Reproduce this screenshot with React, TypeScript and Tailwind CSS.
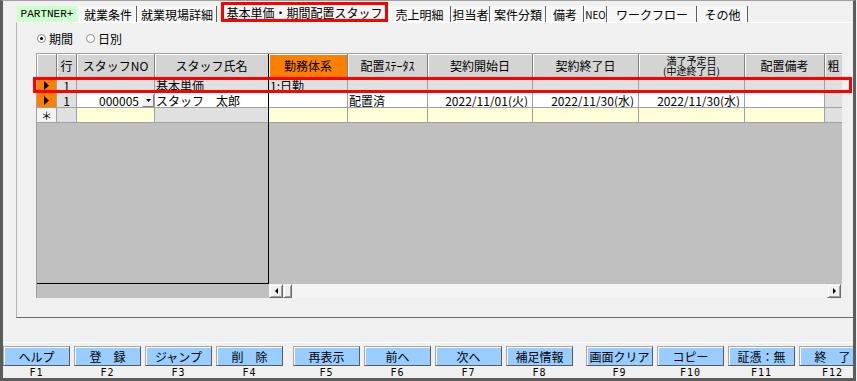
import clsx from "clsx";
import type { ReactNode } from "react";

const TABS = [
  { label: "就業条件", w: "w-[58px]" },
  { label: "就業現場詳細", w: "w-[80px]" },
  { label: "基本単価・期間配置スタッフ", w: "w-[167px]", active: true },
  { label: "売上明細", w: "w-[63px]" },
  { label: "担当者", w: "w-[39px]" },
  { label: "案件分類", w: "w-[56px]" },
  { label: "備考", w: "w-[38px]" },
  { label: "NEO", w: "w-[23px]", small: true },
  { label: "ワークフロー", w: "w-[90px]" },
  { label: "その他", w: "w-[51px]" },
];

const KEY_GROUPS = [
  [
    ["ヘルプ", "F1"],
    ["登　録", "F2"],
    ["ジャンプ", "F3"],
    ["削　除", "F4"],
  ],
  [
    ["再表示", "F5"],
    ["前へ", "F6"],
    ["次へ", "F7"],
    ["補足情報", "F8"],
  ],
  [
    ["画面クリア", "F9"],
    ["コピー", "F10"],
    ["証憑：無", "F11"],
    ["終　了", "F12"],
  ],
];

const GRAY = "bg-[#e0e0e0]";
const WHITE = "bg-white";
const YELLOW = "bg-[#ffffd7]";

// right pane columns, the last one is cut off by the grid edge
const RIGHT_COLS = ["w-[79px]", "w-[80px]", "w-[105px]", "w-[106px]", "w-[106px]", "w-[80px]", "w-[17px]"];

const TabRow = () => {
  return (
    <div className="h-[21px] shrink-0 flex items-end pl-[14px]">
      <div className="h-[16px] w-[60px] shrink-0 bg-[#ccffcc] flex items-center justify-center font-['Liberation_Mono',monospace] text-[11px] leading-[12px]">
        PARTNER+
      </div>
      <div className="flex items-end ml-[2px]">
        {TABS.map((t) =>
          t.active ? (
            <div
              key={t.label}
              className={clsx(
                t.w,
                "h-[20px] ml-[4px] shrink-0 flex items-center justify-center border-[3px] border-[#ff0000] bg-[#f4f4f4] leading-[13px]"
              )}
            >
              {t.label}
            </div>
          ) : (
            <div
              key={t.label}
              className={clsx(
                t.w,
                "h-[16px] shrink-0 flex items-center justify-center bg-[#f6f6f6] border-l border-l-white border-r border-r-[#5e5e5e] leading-[13px] whitespace-nowrap",
                t.small && "text-[10px]"
              )}
            >
              {t.label}
            </div>
          )
        )}
      </div>
    </div>
  );
};

const Radio = ({ checked, label }: { checked?: boolean; label: string }) => (
  <div className="flex items-center gap-[3px]">
    <span className="w-[9px] h-[9px] rounded-full border border-[#8a8a8a] bg-white flex items-center justify-center">
      {checked && <span className="w-[3px] h-[3px] rounded-full bg-black" />}
    </span>
    <span className="leading-[13px]">{label}</span>
  </div>
);

interface HeadProps {
  w: string;
  orange?: boolean;
  last?: boolean;
  children?: ReactNode;
}

const Head = ({ w, orange, last, children }: HeadProps) => (
  <div
    className={clsx(
      w,
      "h-[24px] shrink-0 flex items-center justify-center text-center leading-[13px] whitespace-nowrap overflow-hidden border-b border-[#808080] shadow-[inset_1px_1px_0_#ffffff]",
      orange ? "bg-[#ff8000]" : "bg-[#d4d4d4]",
      !last && "border-r"
    )}
  >
    {children}
  </div>
);

interface CellProps {
  w: string;
  bg: string;
  align?: "left" | "center" | "right";
  last?: boolean;
  children?: ReactNode;
}

const Cell = ({ w, bg, align = "left", last, children }: CellProps) => (
  <div
    className={clsx(
      w,
      bg,
      "h-[15px] shrink-0 flex items-center overflow-hidden whitespace-nowrap leading-[13px] border-b border-[#a0a0a0]",
      !last && "border-r",
      align === "left" && "pl-[1px]",
      align === "center" && "justify-center",
      align === "right" && "justify-end pr-[4px]"
    )}
  >
    {children}
  </div>
);

const Indicator = ({ kind }: { kind: "arrow" | "new" }) => (
  <div
    className={clsx(
      "w-[20px] h-[15px] shrink-0 flex items-center justify-center border-r border-b border-[#a0a0a0]",
      kind === "arrow" ? "bg-[#ff8000]" : "bg-[#f4f4f4]"
    )}
  >
    {kind === "arrow" ? (
      <svg width="5" height="9" viewBox="0 0 5 9">
        <path d="M0 0L5 4.5L0 9Z" fill="#000" />
      </svg>
    ) : (
      <span className="text-[11px] leading-[12px]">＊</span>
    )}
  </div>
);

const DropButton = () => (
  <div className="w-[12px] h-[13px] ml-[3px] shrink-0 flex items-center justify-center bg-[#f0f0f0] border border-t-white border-l-white border-r-[#808080] border-b-[#808080]">
    <svg width="5" height="3" viewBox="0 0 5 3">
      <path d="M0 0H5L2.5 3Z" fill="#000" />
    </svg>
  </div>
);

const LeftPane = () => {
  return (
    <div className="w-[232px] shrink-0 flex flex-col">
      <div className="h-[230px] flex flex-col border-r border-b border-black">
        <div className="flex">
          <Head w="w-[20px]" />
          <Head w="w-[20px]">行</Head>
          <Head w="w-[78px]">スタッフNO</Head>
          <Head w="w-[113px]" last>
            スタッフ氏名
          </Head>
        </div>
        <div className="flex">
          <Indicator kind="arrow" />
          <Cell w="w-[20px]" bg={GRAY} align="center">
            1
          </Cell>
          <Cell w="w-[78px]" bg={GRAY} />
          <Cell w="w-[113px]" bg={GRAY} last>
            基本単価
          </Cell>
        </div>
        <div className="flex">
          <Indicator kind="arrow" />
          <Cell w="w-[20px]" bg={GRAY} align="center">
            1
          </Cell>
          <div className="w-[78px] h-[15px] shrink-0 flex items-center justify-end bg-white border-r border-b border-[#a0a0a0] leading-[13px]">
            <span>000005</span>
            <DropButton />
          </div>
          <Cell w="w-[113px]" bg={WHITE} last>
            スタッフ　太郎
          </Cell>
        </div>
        <div className="flex">
          <Indicator kind="new" />
          <Cell w="w-[20px]" bg={GRAY} />
          <Cell w="w-[78px]" bg={YELLOW} />
          <Cell w="w-[113px]" bg={GRAY} last />
        </div>
        <div className="flex-1 bg-[#c0c0c0]" />
      </div>
      <div className="h-[14px] bg-[#c0c0c0]" />
    </div>
  );
};

const ScrollButton = ({ dir }: { dir: "left" | "right" }) => (
  <div className="w-[14px] h-[14px] shrink-0 flex items-center justify-center bg-[#f0f0f0] border border-t-[#f0f0f0] border-l-[#f0f0f0] border-r-[#696969] border-b-[#696969] shadow-[inset_1px_1px_0_#ffffff,inset_-1px_-1px_0_#a0a0a0]">
    <svg width="3" height="6" viewBox="0 0 3 6">
      <path d={dir === "left" ? "M3 0L0 3L3 6Z" : "M0 0L3 3L0 6Z"} fill="#000" />
    </svg>
  </div>
);

const RightPane = () => {
  const row1 = ["1:日勤", "", "", "", "", "", ""];
  const row2 = ["", "配置済", "2022/11/01(火)", "2022/11/30(水)", "2022/11/30(水)", "", ""];

  return (
    <div className="w-[573px] shrink-0 flex flex-col overflow-hidden">
      <div className="h-[230px] flex flex-col">
        <div className="flex">
          <Head w={RIGHT_COLS[0]} orange>
            勤務体系
          </Head>
          <Head w={RIGHT_COLS[1]}>配置ｽﾃｰﾀｽ</Head>
          <Head w={RIGHT_COLS[2]}>契約開始日</Head>
          <Head w={RIGHT_COLS[3]}>契約終了日</Head>
          <Head w={RIGHT_COLS[4]}>
            <span className="text-[10px] leading-[10px] pt-[1px]">
              満了予定日
              <br />
              (中途終了日)
            </span>
          </Head>
          <Head w={RIGHT_COLS[5]}>配置備考</Head>
          <Head w={RIGHT_COLS[6]} last>
            粗
          </Head>
        </div>
        <div className="flex">
          {row1.map((t, i) => (
            <Cell key={i} w={RIGHT_COLS[i]} bg={GRAY} last={i === 6}>
              {t}
            </Cell>
          ))}
        </div>
        <div className="flex">
          {row2.map((t, i) => (
            <Cell
              key={i}
              w={RIGHT_COLS[i]}
              bg={i === 6 ? GRAY : WHITE}
              align={i >= 2 && i <= 4 ? "right" : "left"}
              last={i === 6}
            >
              {t}
            </Cell>
          ))}
        </div>
        <div className="flex">
          {RIGHT_COLS.map((w, i) => (
            <Cell key={i} w={w} bg={i === 6 ? GRAY : YELLOW} last={i === 6} />
          ))}
        </div>
        <div className="flex-1 bg-[#c0c0c0]" />
      </div>
      <div className="h-[14px] flex">
        <ScrollButton dir="left" />
        <div className="w-[9px] h-[14px] shrink-0 bg-[#f0f0f0] border border-t-[#f0f0f0] border-l-[#f0f0f0] border-r-[#696969] border-b-[#696969] shadow-[inset_1px_1px_0_#ffffff,inset_-1px_-1px_0_#a0a0a0]" />
        <div className="flex-1 bg-[#f4f4f4]" />
        <ScrollButton dir="right" />
        <div className="w-[1px] shrink-0" />
      </div>
    </div>
  );
};

const Panel = () => {
  return (
    <div className="ml-[13px] h-[296px] shrink-0 flex flex-col border-t border-t-white border-l border-l-[#b4b4b4] border-b border-b-[#6a6a6a]">
      <div className="h-[30px] shrink-0 flex items-center gap-[13px] pl-[20px]">
        <Radio checked label="期間" />
        <Radio label="日別" />
      </div>
      <div className="ml-[19px] w-[806px] h-[245px] shrink-0 flex border-l border-t border-[#a0a0a0]">
        <LeftPane />
        <RightPane />
      </div>
    </div>
  );
};

const FunctionKeys = () => {
  return (
    <div className="border-t border-white pt-[3px] flex">
      {KEY_GROUPS.map((group, gi) => (
        <div
          key={gi}
          className={clsx("flex gap-[4px] shrink-0", gi === 1 && "ml-[10px]", gi === 2 && "ml-[13px]")}
        >
          {group.map(([label, key]) => (
            <div key={key} className="w-[67px] shrink-0 flex flex-col">
              <button
                type="button"
                className="h-[20px] bg-[#99ccff] border border-[#a8a8a8] border-r-[#5a5a5a] border-b-[#5a5a5a] shadow-[inset_1px_1px_0_#ffffff] flex items-center justify-center leading-[13px] whitespace-nowrap"
              >
                {label}
              </button>
              <span className="h-[12px] flex items-center justify-center font-['DejaVu_Sans_Mono',monospace] text-[10px] tracking-[1px] leading-[11px]">
                {key}
              </span>
            </div>
          ))}
        </div>
      ))}
    </div>
  );
};

export default function App() {
  return (
    <div className="relative w-[857px] h-[381px] bg-[#f0f0f0] overflow-hidden font-['Noto_Sans_CJK_JP',sans-serif] text-[12px] text-black">
      <div className="w-[856px] h-[381px] flex flex-col border-t border-t-[#a0a0a0] border-l-[3px] border-r-[3px] border-b-[3px] border-l-[#5c5c5c] border-r-[#5c5c5c] border-b-[#5c5c5c] overflow-hidden">
        <TabRow />
        <Panel />
        <div className="h-[24px] shrink-0" />
        <FunctionKeys />
      </div>
      {/* annotation around the first grid row */}
      <div className="absolute left-[33px] top-[77px] w-[819px] h-[16px] border-[3px] border-[#ff0000] pointer-events-none" />
    </div>
  );
}
